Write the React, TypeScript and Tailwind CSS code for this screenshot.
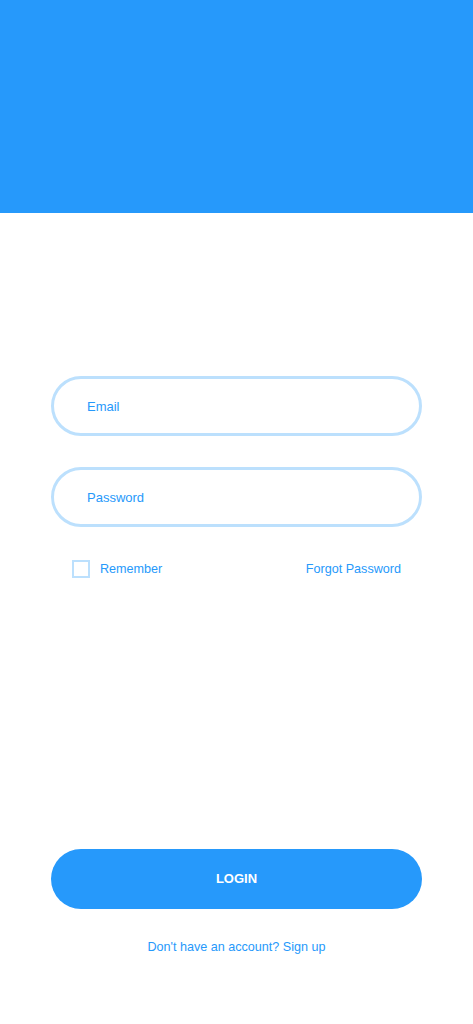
import React, { useState } from 'react';

const App: React.FC = () => {
  const [email, setEmail] = useState('');
  const [password, setPassword] = useState('');
  const [remember, setRemember] = useState(false);

  return (
    <div className="min-h-[1024px] w-full bg-white flex flex-col font-['Liberation_Sans',Arial,sans-serif]">
      <div className="h-[213px] w-full bg-[#2699fb]" />

      <div className="flex flex-col px-[51px] pt-[163px]">
        <input
          type="email"
          placeholder="Email"
          value={email}
          onChange={(e) => setEmail(e.target.value)}
          className="h-[60px] w-full rounded-full border-[3px] border-[#bce0fd] pl-[33px] pr-6 text-[13px] text-[#2699fb] placeholder:text-[#2699fb] focus:outline-none"
        />
        <input
          type="password"
          placeholder="Password"
          value={password}
          onChange={(e) => setPassword(e.target.value)}
          className="mt-[31px] h-[60px] w-full rounded-full border-[3px] border-[#bce0fd] pl-[33px] pr-6 text-[13px] text-[#2699fb] placeholder:text-[#2699fb] focus:outline-none"
        />

        <div className="mt-[33px] flex items-center justify-between pl-[21px] pr-[21px]">
          <label className="flex items-center gap-[10px] cursor-pointer">
            <span
              onClick={() => setRemember(!remember)}
              className="flex h-[18px] w-[18px] items-center justify-center border-2 border-[#bce0fd] bg-white"
            >
              {remember && <span className="h-2 w-2 bg-[#2699fb]" />}
            </span>
            <span className="text-[12.6px] text-[#2699fb]">Remember</span>
          </label>
          <a href="#" className="text-[12.6px] text-[#2699fb]">Forgot Password</a>
        </div>
      </div>

      <div className="flex flex-col px-[51px] pt-[270px]">
        <button className="h-[60px] w-full rounded-full bg-[#2699fb] text-[13px] font-bold text-white">
          LOGIN
        </button>
        <p className="mt-[29px] text-center text-[12.6px] text-[#2699fb]">
          Don't have an account? Sign up
        </p>
      </div>
    </div>
  );
};

export default App;
